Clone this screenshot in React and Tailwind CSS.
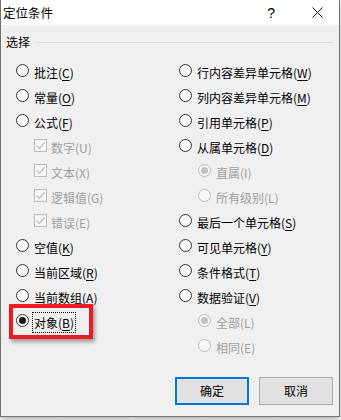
import React from "react";

const FONT = { fontFamily: '"Noto Sans CJK SC", "Microsoft YaHei", sans-serif' };

function Radio({ checked, disabled }) {
  return (
    <span
      className={
        "flex h-[13px] w-[13px] shrink-0 items-center justify-center rounded-full border " +
        (disabled ? "border-[#bcbcbc] bg-[#f7f7f7]" : "border-[#333333] bg-white")
      }
    >
      {checked ? (
        <span className={"h-[7px] w-[7px] rounded-full " + (disabled ? "bg-[#c2c2c2]" : "bg-[#1a1a1a]")} />
      ) : null}
    </span>
  );
}

function Check() {
  return (
    <span className="flex h-[13px] w-[13px] shrink-0 items-center justify-center border border-[#bcbcbc] bg-[#f7f7f7]">
      <svg width="11" height="11" viewBox="0 0 11 11">
        <path d="M1.5 5.5 L4.3 8.3 L9.5 2.5" fill="none" stroke="#bdbdbd" strokeWidth="1.2" />
      </svg>
    </span>
  );
}

function Label({ text, k, disabled, focus }) {
  return (
    <span
      className={
        "text-[12px] leading-[16px] whitespace-nowrap " +
        (disabled ? "text-[#a0a0a0]" : "text-black") +
        (focus ? " border border-dotted border-black px-[1px] py-[1px] -ml-[2px]" : "")
      }
    >
      {text}(
      {disabled ? k : <span className="underline underline-offset-2">{k}</span>})
    </span>
  );
}

function Row({ kind = "radio", text, k, disabled, checked, indent, focus }) {
  return (
    <div className={"flex h-[25px] items-center " + (indent ? "pl-[18px]" : "")}>
      {kind === "check" ? <Check /> : <Radio checked={checked} disabled={disabled} />}
      <span className={kind === "check" ? "ml-[4px]" : "ml-[5px]"}>
        <Label text={text} k={k} disabled={disabled} focus={focus} />
      </span>
    </div>
  );
}

export default function App() {
  return (
    <div className="relative flex h-[420px] w-[341px] flex-col overflow-hidden bg-white" style={FONT}>
      <div className="flex h-[417px] w-[340px] shrink-0 flex-col border-b border-l border-r border-[#727272] bg-[#f0f0f0] shadow-[0_2px_6px_rgba(0,0,0,0.35)]">
        {/* title bar */}
        <div className="flex h-[25px] shrink-0 items-center bg-white pl-[2px]">
          <span className="text-[12.5px] leading-[16px] text-black">定位条件</span>
          <span className="ml-auto mr-[37px] text-[14px] leading-[16px] text-black" style={{ fontFamily: '"Liberation Sans", sans-serif' }}>
            ?
          </span>
          <svg width="11" height="11" viewBox="0 0 11 11" className="mr-[16px]">
            <path d="M0.5 0.5 L10.5 10.5 M10.5 0.5 L0.5 10.5" stroke="#111" strokeWidth="1" />
          </svg>
        </div>

        {/* body */}
        <div className="flex flex-1 flex-col pt-[9px]">
          <div className="flex h-[16px] items-center pl-[5px] pr-[6px]">
            <span className="text-[12px] leading-[16px] text-black">选择</span>
            <span className="ml-[6px] h-[1px] flex-1 bg-[#dcdcdc]" />
          </div>

          <div className="mt-[8px] flex pl-[15px]">
            <div className="flex w-[163px] flex-col">
              <Row text="批注" k="C" />
              <Row text="常量" k="O" />
              <Row text="公式" k="F" />
              <Row kind="check" text="数字" k="U" disabled indent />
              <Row kind="check" text="文本" k="X" disabled indent />
              <Row kind="check" text="逻辑值" k="G" disabled indent />
              <Row kind="check" text="错误" k="E" disabled indent />
              <Row text="空值" k="K" />
              <Row text="当前区域" k="R" />
              <Row text="当前数组" k="A" />
              <Row text="对象" k="B" checked focus />
            </div>
            <div className="flex flex-col">
              <Row text="行内容差异单元格" k="W" />
              <Row text="列内容差异单元格" k="M" />
              <Row text="引用单元格" k="P" />
              <Row text="从属单元格" k="D" />
              <div className="pl-[1px]">
                <Row text="直属" k="I" disabled checked indent />
              </div>
              <div className="pl-[1px]">
                <Row text="所有级别" k="L" disabled indent />
              </div>
              <Row text="最后一个单元格" k="S" />
              <Row text="可见单元格" k="Y" />
              <Row text="条件格式" k="T" />
              <Row text="数据验证" k="V" />
              <div className="pl-[1px]">
                <Row text="全部" k="L" disabled checked indent />
              </div>
              <div className="pl-[1px]">
                <Row text="相同" k="E" disabled indent />
              </div>
            </div>
          </div>

          <div className="mt-[19px] flex justify-end gap-[10px] pr-[6px]">
            <button className="flex h-[28px] w-[74px] items-center justify-center border-2 border-[#0078d7] bg-[#e1e1e1] text-[12px] text-black">
              确定
            </button>
            <button className="flex h-[28px] w-[74px] items-center justify-center border border-[#adadad] bg-[#e1e1e1] text-[12px] text-black">
              取消
            </button>
          </div>
        </div>
      </div>

      {/* spreadsheet strip below */}
      <div className="flex flex-1">
        <div className="w-[59px] border-r border-[#d4d4d4]" />
        <div className="w-[73px] border-r border-[#d4d4d4]" />
        <div className="w-[71px] border-r border-[#d4d4d4]" />
        <div className="w-[72px] border-r border-[#d4d4d4]" />
        <div className="flex-1" />
      </div>

      {/* red highlight annotation */}
      <div className="absolute left-[9px] top-[304px] h-[35px] w-[84px] border-[4px] border-[#ec1c24] shadow-[2px_3px_4px_rgba(0,0,0,0.35)]" />
    </div>
  );
}
